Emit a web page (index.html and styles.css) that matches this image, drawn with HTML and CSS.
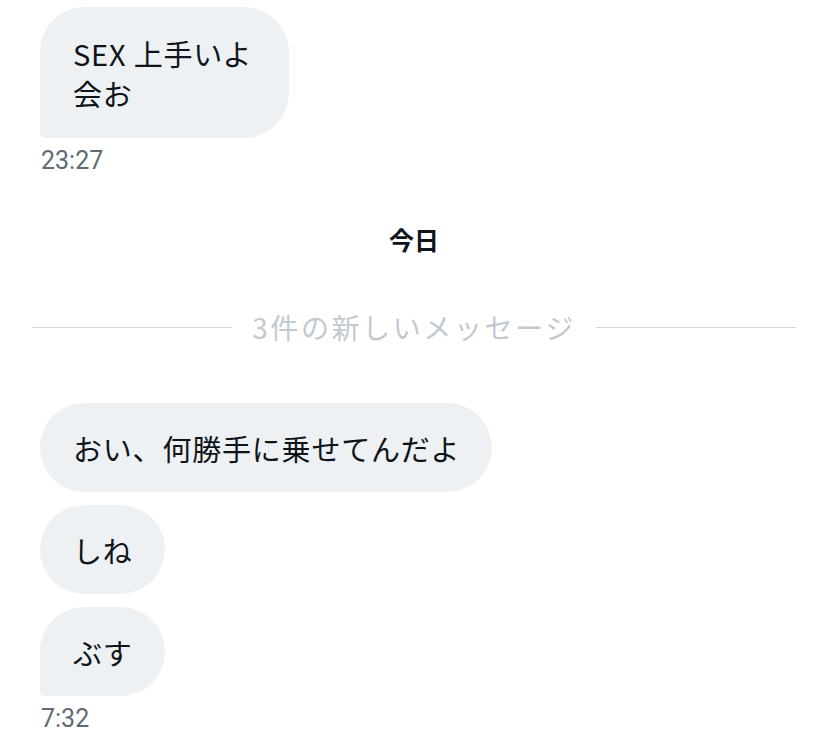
FILE: index.html
```html
<!DOCTYPE html>
<html lang="ja">
<head>
<meta charset="utf-8">
<link rel="stylesheet" href="styles.css">
</head>
<body>
<main class="chat">
  <div class="group first-group">
    <div class="bubble last">SEX 上手いよ<br>会お</div>
    <div class="time">23:27</div>
  </div>
  <div class="day">今日</div>
  <div class="divider">
    <span class="rule"></span>
    <span class="divider-text">3件の新しいメッセージ</span>
    <span class="rule"></span>
  </div>
  <div class="group new-group">
    <div class="bubble">おい、何勝手に乗せてんだよ</div>
    <div class="bubble">しね</div>
    <div class="bubble last">ぶす</div>
    <div class="time">7:32</div>
  </div>
</main>
</body>
</html>
```
FILE: styles.css
```css
html, body {
  margin: 0;
  padding: 0;
  background: #ffffff;
}
body {
  width: 828px;
  height: 738px;
  overflow: hidden;
  font-family: "Noto Sans CJK JP", "Noto Sans", sans-serif;
  color: #0f1419;
}
.chat {
  display: flex;
  flex-direction: column;
}
.group {
  display: flex;
  flex-direction: column;
  align-items: flex-start;
  gap: 13px;
  padding-left: 40px;
}
.first-group {
  margin-top: 7px;
}
.bubble {
  background: #eef1f3;
  border-radius: 45px;
  padding: 25px 32px 24px 33px;
  font-size: 29px;
  line-height: 40px;
  letter-spacing: 0.8px;
  white-space: nowrap;
}
.bubble.last {
  border-bottom-left-radius: 5px;
}
.first-group .bubble {
  padding-top: 26px;
  padding-bottom: 25px;
  padding-right: 37px;
}
.time {
  margin-top: -4px;
  margin-left: 1px;
  font-family: "Roboto", "Noto Sans", sans-serif;
  font-size: 25px;
  line-height: 28px;
  color: #5f6a74;
}
.day {
  margin-top: 50px;
  text-align: center;
  font-size: 25px;
  font-weight: 700;
  line-height: 28px;
  color: #0f1419;
}
.divider {
  margin-top: 54px;
  display: flex;
  align-items: center;
  gap: 20px;
  padding: 0 32px;
}
.rule {
  flex: 1;
  height: 1px;
  background: #d3d9de;
}
.divider-text {
  font-size: 28px;
  line-height: 40px;
  color: #c1c9d1;
  letter-spacing: 2.6px;
  white-space: nowrap;
}
.new-group {
  margin-top: 56px;
}
```
